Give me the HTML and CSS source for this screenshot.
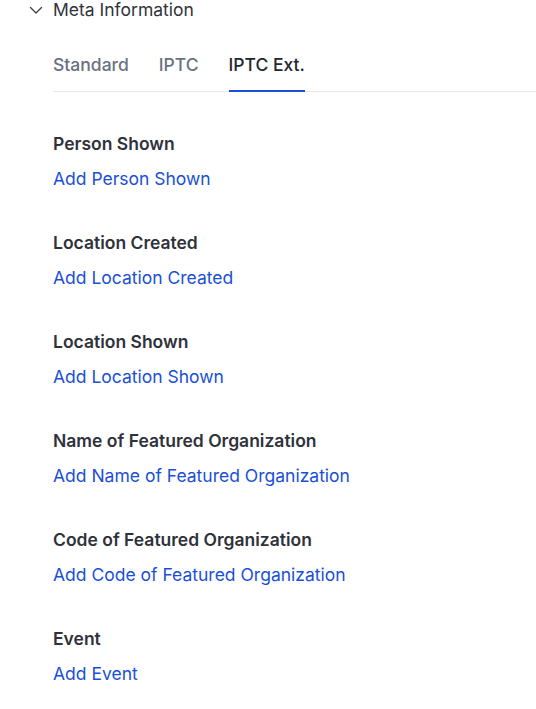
FILE: index.html
```html
<!DOCTYPE html>
<html lang="en">
<head>
<meta charset="UTF-8" />
<meta name="viewport" content="width=device-width, initial-scale=1" />
<title>Meta Information</title>
<link rel="stylesheet" href="styles.css">
</head>
<body>

<div class="panel">
  <div class="panel-head">
    <svg class="chevron" width="14" height="14" viewBox="0 0 14 14">
      <path d="M1.5 4.5 L7 10 L12.5 4.5" fill="none" stroke="#3a3d45" stroke-width="1.3" stroke-linecap="round" stroke-linejoin="round" />
    </svg>
    <span class="panel-title">Meta Information</span>
  </div>

  <div class="panel-body">
    <div class="tabs">
      <span class="tab">Standard</span>
      <span class="tab">IPTC</span>
      <span class="tab active">IPTC Ext.</span>
    </div>

    <div class="field">
      <div class="field-label">Person Shown</div>
      <a class="field-add" href="#">Add Person Shown</a>
    </div>

    <div class="field">
      <div class="field-label">Location Created</div>
      <a class="field-add" href="#">Add Location Created</a>
    </div>

    <div class="field">
      <div class="field-label">Location Shown</div>
      <a class="field-add" href="#">Add Location Shown</a>
    </div>

    <div class="field">
      <div class="field-label">Name of Featured Organization</div>
      <a class="field-add" href="#">Add Name of Featured Organization</a>
    </div>

    <div class="field">
      <div class="field-label">Code of Featured Organization</div>
      <a class="field-add" href="#">Add Code of Featured Organization</a>
    </div>

    <div class="field">
      <div class="field-label">Event</div>
      <a class="field-add" href="#">Add Event</a>
    </div>
  </div>
</div>

</body>
</html>
```

FILE: styles.css
```css
body {
  margin: 0;
  background: #fff;
  font-family: Inter, "Noto Sans", sans-serif;
  color: #2f323a;
  overflow: hidden;
}

.panel-head {
  display: flex;
  align-items: center;
  height: 20px;
  padding-left: 29px;
  gap: 10px;
}

.chevron {
  display: block;
}

.panel-title {
  font-size: 17.5px;
  line-height: 20px;
  color: #30333b;
}

.panel-body {
  padding-left: 53px;
}

/* Tabs */
.tabs {
  display: flex;
  gap: 30px;
  margin-top: 33px;
  border-bottom: 1px solid #e6e8ec;
}

.tab {
  font-size: 17.5px;
  font-weight: 500;
  line-height: 24px;
  padding-bottom: 13px;
  color: #6b7180;
  margin-bottom: -1px;
  border-bottom: 2px solid transparent;
}

.tab.active {
  color: #23262d;
  border-bottom-color: #1a4fd6;
}

/* Fields */
.field {
  display: flex;
  flex-direction: column;
  align-items: flex-start;
  margin-top: 40px;
}

.field:first-of-type {
  margin-top: 41px;
}

.field-label {
  font-size: 17.5px;
  font-weight: 600;
  line-height: 24px;
  color: #2f323a;
}

.field-add {
  margin-top: 11px;
  font-size: 17.5px;
  line-height: 24px;
  color: #1a4fd6;
  text-decoration: none;
}
```
